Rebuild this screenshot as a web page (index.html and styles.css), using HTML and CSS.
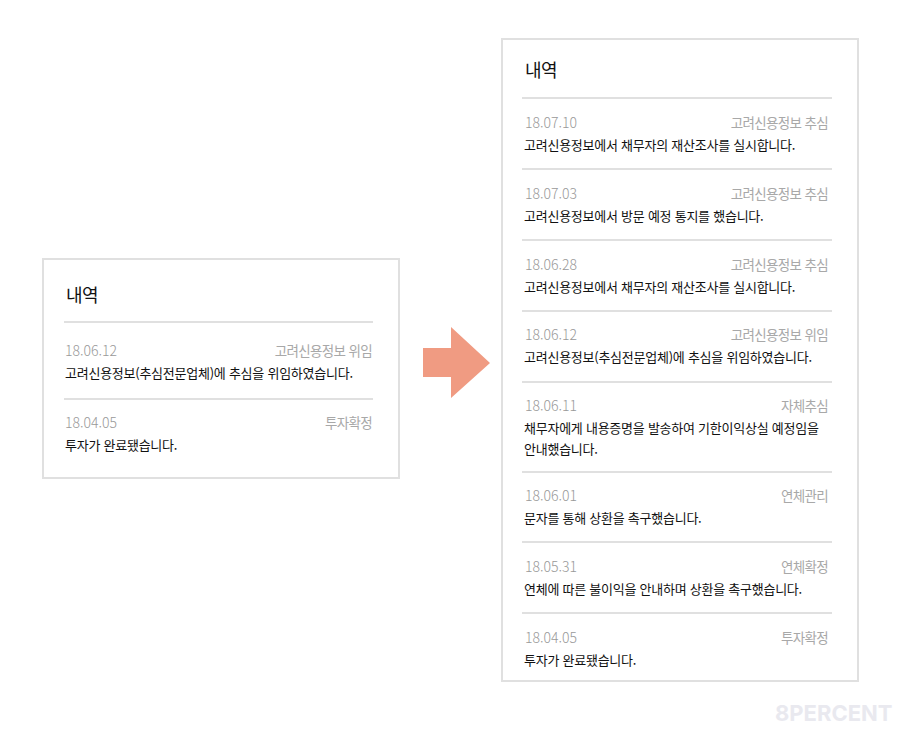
FILE: index.html
```html
<!DOCTYPE html>
<html lang="ko">
<head>
<meta charset="utf-8">
<title>내역</title>
<link rel="stylesheet" href="styles.css">
</head>
<body>
<main class="stage">
  <section class="card card-before">
    <h2 class="title">내역</h2>
    <ul class="list">
      <li class="row row-open"><div class="meta"><span class="date">18.06.12</span><span>고려신용정보 위임</span></div><p class="desc">고려신용정보(추심전문업체)에 추심을 위임하였습니다.</p></li>
      <li class="row"><div class="meta"><span class="date">18.04.05</span><span>투자확정</span></div><p class="desc">투자가 완료됐습니다.</p></li>
    </ul>
  </section>
  <svg class="arrow" width="67" height="71" viewBox="0 0 67 71"><path d="M0 21H28V0L67 36L28 71V50H0Z" fill="#f09b82"/></svg>
  <section class="card card-after">
    <h2 class="title">내역</h2>
    <ul class="list">
      <li class="row"><div class="meta"><span class="date">18.07.10</span><span>고려신용정보 추심</span></div><p class="desc">고려신용정보에서 채무자의 재산조사를 실시합니다.</p></li>
      <li class="row"><div class="meta"><span class="date">18.07.03</span><span>고려신용정보 추심</span></div><p class="desc">고려신용정보에서 방문 예정 통지를 했습니다.</p></li>
      <li class="row"><div class="meta"><span class="date">18.06.28</span><span>고려신용정보 추심</span></div><p class="desc">고려신용정보에서 채무자의 재산조사를 실시합니다.</p></li>
      <li class="row row-tight"><div class="meta"><span class="date">18.06.12</span><span>고려신용정보 위임</span></div><p class="desc">고려신용정보(추심전문업체)에 추심을 위임하였습니다.</p></li>
      <li class="row row-tight row-tall"><div class="meta"><span class="date">18.06.11</span><span>자체추심</span></div><p class="desc">채무자에게 내용증명을 발송하여 기한이익상실 예정임을<br>안내했습니다.</p></li>
      <li class="row row-tight row-short"><div class="meta"><span class="date">18.06.01</span><span>연체관리</span></div><p class="desc">문자를 통해 상환을 촉구했습니다.</p></li>
      <li class="row"><div class="meta"><span class="date">18.05.31</span><span>연체확정</span></div><p class="desc">연체에 따른 불이익을 안내하며 상환을 촉구했습니다.</p></li>
      <li class="row"><div class="meta"><span class="date">18.04.05</span><span>투자확정</span></div><p class="desc">투자가 완료됐습니다.</p></li>
    </ul>
  </section>
  <div class="logo">8PERCENT</div>
</main>
</body>
</html>
```
FILE: styles.css
```css
* { box-sizing: border-box; }
html, body { margin: 0; padding: 0; background: #fff; }
body { font-family: "Noto Sans CJK KR", "Noto Sans", sans-serif; }
.stage {
  position: relative;
  width: 900px;
  height: 735px;
  padding: 38px 0 0 42px;
  display: flex;
  align-items: flex-start;
  overflow: hidden;
}
.card {
  width: 358px;
  border: 2px solid #e0e0e0;
  padding: 0 25px 0 19px;
  background: #fff;
}
.card-before { margin-top: 220px; height: 221px; padding-left: 20px; }
.card-after { height: 644px; }
.arrow { margin: 289px 11px 0 23px; flex: none; }
.title {
  margin: 0;
  height: 57px;
  padding: 14px 0 0 3px;
  font-size: 18px;
  line-height: 30px;
  font-weight: 400;
  color: #111;
  letter-spacing: -0.5px;
}
.card-before .title { height: 61px; padding: 19px 0 0 2px; }
.list { margin: 0; padding: 0; list-style: none; }
.row {
  border-top: 2px solid #e0e0e0;
  padding: 12px 4px 0 3px;
  height: 71px;
}
.row-tight { padding-top: 11px; }
.row-tall { height: 90px; }
.row-tall .desc { line-height: 21px; }
.row-short { height: 70px; }
.card-before .row { height: 77px; padding: 11px 1px 0; }
.card-before .row-open { padding-top: 16px; }
.meta {
  display: flex;
  justify-content: space-between;
  font-size: 13.5px;
  line-height: 22px;
  color: #a8a8a8;
  letter-spacing: -0.65px;
}
.date { font-size: 14px; letter-spacing: 0; font-weight: 300; color: #999; }
.desc {
  margin: 1px 0 0 -1px;
  font-size: 13px;
  line-height: 22px;
  color: #111;
  letter-spacing: -0.25px;
}
.card-before .desc { margin: 1px 0 0; }
.logo {
  position: absolute;
  left: 775px;
  top: 698px;
  font-family: "Inter", "Liberation Sans", sans-serif;
  font-weight: 700;
  font-size: 22px;
  line-height: 30px;
  color: #e9e9ef;
}
```
